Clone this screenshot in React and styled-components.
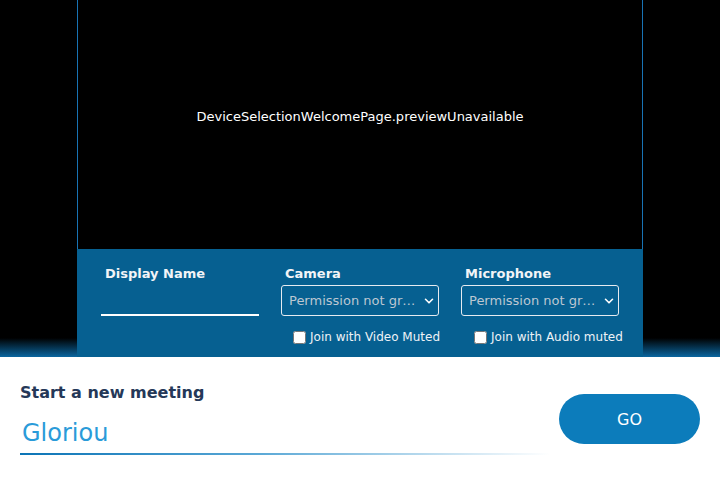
import React, { useState } from "react";
import styled, { createGlobalStyle } from "styled-components";

const GlobalStyle = createGlobalStyle`
  html, body {
    margin: 0;
    padding: 0;
    background: #fff;
    font-family: "DejaVu Sans", Verdana, sans-serif;
    overflow: hidden;
  }
  * {
    box-sizing: border-box;
  }
`;

const Page = styled.div`
  width: 720px;
  height: 480px;
  display: flex;
  flex-direction: column;
`;

const Header = styled.div`
  height: 357px;
  display: flex;
  justify-content: center;
  background: linear-gradient(
    to bottom,
    #000 0,
    #000 338px,
    #0a66a0 357px
  );
`;

const PreviewColumn = styled.div`
  width: 566px;
  display: flex;
  flex-direction: column;
`;

const Preview = styled.div`
  height: 249px;
  background: #000;
  border-left: 1px solid #1873b4;
  border-right: 1px solid #1873b4;
  display: flex;
  align-items: center;
  justify-content: center;
  padding-bottom: 16px;
  color: #fff;
  font-size: 13px;
`;

const Toolbar = styled.div`
  flex: 1;
  background: #066091;
  display: grid;
  grid-template-columns: repeat(3, 158px);
  column-gap: 22px;
  padding: 16px 24px 0;
`;

const Field = styled.div`
  display: flex;
  flex-direction: column;
`;

const Label = styled.label`
  color: #f2f4f7;
  font-size: 13px;
  font-weight: bold;
  padding-left: 4px;
  height: 17px;
  line-height: 17px;
`;

const NameInput = styled.input`
  height: 34px;
  border: none;
  border-bottom: 2px solid #fff;
  background: transparent;
  color: #fff;
  font-family: inherit;
  font-size: 13px;
  outline: none;
  padding: 0 4px;
`;

const Select = styled.div`
  margin-top: 3px;
  height: 31px;
  border: 1px solid #e6ebf0;
  border-radius: 3px;
  display: flex;
  align-items: center;
  gap: 3px;
  padding: 0 4px 0 7px;
  color: #bcc7d2;
  font-size: 13px;
  cursor: pointer;
`;

const SelectText = styled.span`
  flex: 1;
  min-width: 0;
  white-space: nowrap;
  overflow: hidden;
  text-overflow: ellipsis;
`;

const Check = styled.label`
  margin-top: 14px;
  display: flex;
  align-items: center;
  padding-left: ${(p) => p.indent}px;
  color: #eef2f6;
  font-size: 12px;
  white-space: nowrap;
`;

const Box = styled.input`
  margin: 0 4px 0 0;
  width: 13px;
  height: 13px;
`;

const Chevron = () => (
  <svg width="10" height="10" viewBox="0 0 10 10">
    <path
      d="M1.5 3.3 L5 6.8 L8.5 3.3"
      fill="none"
      stroke="#fff"
      strokeWidth="1.6"
      strokeLinecap="round"
      strokeLinejoin="round"
    />
  </svg>
);

const Welcome = styled.div`
  flex: 1;
  background: #fff;
  display: flex;
  align-items: flex-start;
  padding: 26px 20px 0;
`;

const MeetingForm = styled.div`
  width: 530px;
  display: flex;
  flex-direction: column;
`;

const Title = styled.div`
  color: #253858;
  font-size: 16px;
  font-weight: bold;
  line-height: 20px;
`;

const RoomInput = styled.input`
  margin-top: 12px;
  height: 36px;
  border: none;
  outline: none;
  padding: 0 2px;
  color: #2a9bd9;
  font-family: inherit;
  font-size: 24px;
  background: transparent;
`;

const Underline = styled.div`
  height: 2px;
  margin-top: 2px;
  background: linear-gradient(to right, #0b74b6 0%, #5aa8d6 45%, rgba(255, 255, 255, 0) 100%);
`;

const GoButton = styled.button`
  margin-left: auto;
  margin-top: 11px;
  width: 141px;
  height: 50px;
  border: none;
  border-radius: 25px;
  background: #0c7cbb;
  color: #fff;
  font-family: inherit;
  font-size: 16px;
  cursor: pointer;
`;

const App = () => {
  const [name, setName] = useState("");
  const [room, setRoom] = useState("Gloriou");

  return (
    <Page>
      <GlobalStyle />
      <Header>
        <PreviewColumn>
          <Preview>DeviceSelectionWelcomePage.previewUnavailable</Preview>
          <Toolbar>
            <Field>
              <Label>Display Name</Label>
              <NameInput value={name} onChange={(e) => setName(e.target.value)} />
            </Field>
            <Field>
              <Label>Camera</Label>
              <Select>
                <SelectText>Permission not granted</SelectText>
                <Chevron />
              </Select>
              <Check indent={12}>
                <Box type="checkbox" />
                Join with Video Muted
              </Check>
            </Field>
            <Field>
              <Label>Microphone</Label>
              <Select>
                <SelectText>Permission not granted</SelectText>
                <Chevron />
              </Select>
              <Check indent={13}>
                <Box type="checkbox" />
                Join with Audio muted
              </Check>
            </Field>
          </Toolbar>
        </PreviewColumn>
      </Header>
      <Welcome>
        <MeetingForm>
          <Title>Start a new meeting</Title>
          <RoomInput value={room} onChange={(e) => setRoom(e.target.value)} />
          <Underline />
        </MeetingForm>
        <GoButton>GO</GoButton>
      </Welcome>
    </Page>
  );
};

export default App;
